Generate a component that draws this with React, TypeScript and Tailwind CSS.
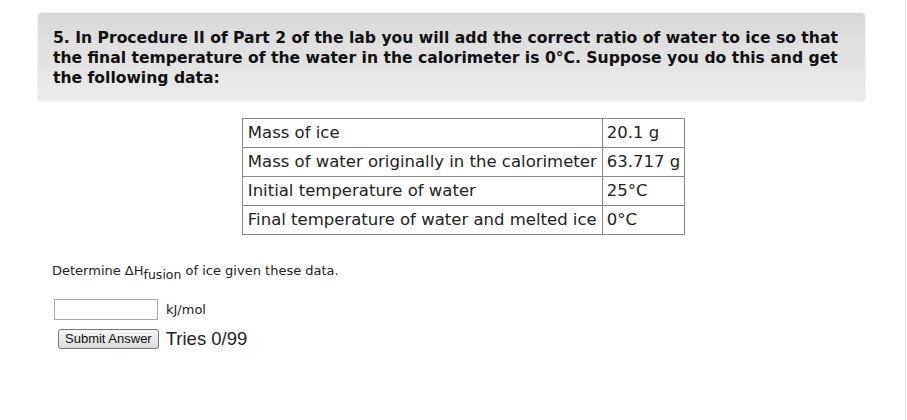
export default function App() {
  const rows: [string, string][] = [
    ["Mass of ice", "20.1 g"],
    ["Mass of water originally in the calorimeter", "63.717 g"],
    ["Initial temperature of water", "25°C"],
    ["Final temperature of water and melted ice", "0°C"],
  ];

  return (
    <div className="w-[907px] h-[420px] bg-white relative text-black font-['DejaVu_Sans',Verdana,sans-serif]">
      <div className="absolute right-[1px] top-0 h-full w-px bg-[#e4e4e4]" />
      <div className="pt-[12px] pl-[37px] w-[866px]">
        <div className="rounded-[5px] bg-gradient-to-b from-[#d9d9d9] to-[#ececec] border border-[#f2f2f2] pl-[15px] pr-[20px] pt-[15px] pb-[13px]">
          <h2 className="text-[15.6px] leading-[20px] font-bold text-[#111]">
            5. In Procedure II of Part 2 of the lab you will add the correct ratio of water to ice so that
            the final temperature of the water in the calorimeter is 0°C. Suppose you do this and get
            the following data:
          </h2>
        </div>
      </div>

      <div className="flex justify-center pl-[20px] pt-[16px]">
        <table className="border-collapse border border-[#666] text-[16.5px] leading-[20px] text-[#222]">
          <tbody>
            {rows.map(([k, v]) => (
              <tr key={k} className="h-[29px]">
                <td className="border border-[#888] px-[5px] whitespace-nowrap">{k}</td>
                <td className="border border-[#888] pl-[4px] pr-[4px] whitespace-nowrap">{v}</td>
              </tr>
            ))}
          </tbody>
        </table>
      </div>

      <p className="pl-[52px] pt-[28px] text-[13px] leading-[16px] text-[#222]">
        Determine ΔH<sub className="text-[12.5px] relative top-[0px] align-sub leading-none">fusion</sub> of ice given these data.
      </p>

      <div className="pl-[54px] pt-[18px] flex items-center gap-[8px]">
        <input
          type="text"
          className="w-[104px] h-[21px] border border-[#aaa] bg-white px-1 text-[12px] outline-none"
        />
        <span className="text-[13px] text-[#222]">kJ/mol</span>
      </div>

      <div className="pl-[58px] pt-[9px] flex items-center gap-[7px]">
        <button
          type="button"
          className="h-[20px] px-[6px] rounded-[3px] border border-[#777] bg-gradient-to-b from-[#f6f6f6] to-[#dcdcdc] text-[13px] leading-[16px] text-[#111] font-['Liberation_Sans',Arial,sans-serif]"
        >
          Submit Answer
        </button>
        <span className="text-[18.5px] leading-[20px] text-[#222] font-['Liberation_Sans',Arial,sans-serif]">Tries 0/99</span>
      </div>
    </div>
  );
}
